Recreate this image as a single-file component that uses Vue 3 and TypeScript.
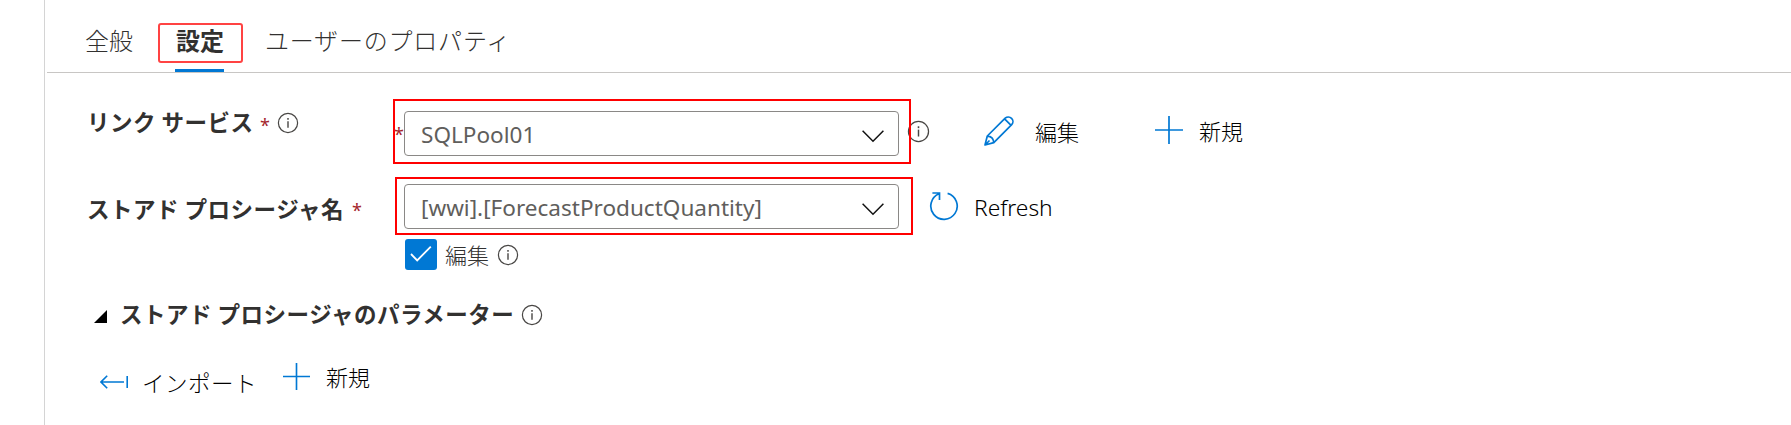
<script setup lang="ts">
import { h, type FunctionalComponent } from 'vue'

const InfoIcon: FunctionalComponent = () =>
  h('svg', { viewBox: '0 0 22 22', fill: 'none', stroke: '#484644', 'stroke-width': 1.2 }, [
    h('circle', { cx: 11, cy: 11, r: 9.6 }),
    h('path', { d: 'M11 9.2v6.6', 'stroke-width': 1.4 }),
    h('path', { d: 'M11 6v1.8', 'stroke-width': 1.5 }),
  ])

const PlusIcon: FunctionalComponent = () =>
  h('svg', { viewBox: '0 0 28 28', fill: 'none', stroke: '#0078d4', 'stroke-width': 1.7 }, [
    h('path', { d: 'M14 0v28M0 14h28' }),
  ])

const ChevronIcon: FunctionalComponent = () =>
  h('svg', { viewBox: '0 0 22 13', fill: 'none', stroke: '#111', 'stroke-width': 1.5 }, [
    h('path', { d: 'M.6 .8 11 11.2 21.4 .8' }),
  ])
</script>

<template>
  <main class="panel">
    <nav class="tabs">
      <span class="tab general">全般</span>
      <span class="tab active">設定</span>
      <span class="tab props">ユーザーのプロパティ</span>
    </nav>

    <section class="row service">
      <div class="label-cell">
        <span class="label l-service">リンク サービス</span>
        <span class="star s-label">*</span>
        <InfoIcon class="info i-label" />
      </div>
      <div class="mark mark-service">
        <span class="star s-field">*</span>
        <div class="select"><span class="value">SQLPool01</span><ChevronIcon class="chevron" /></div>
      </div>
      <InfoIcon class="info i-field" />
      <svg class="pencil" viewBox="0 0 30 30" fill="none" stroke="#0078d4" stroke-width="1.7" stroke-linejoin="round">
        <path d="M1 29 3.3 20 21.2 2.2a4.6 4.6 0 0 1 6.5 6.5L9.8 26.6ZM3.3 20.2c3.8.2 6.2 2.6 6.5 6.4M20.6 2.9l6.5 6.5M1.5 28.5l4-4" />
      </svg>
      <span class="text t-edit">編集</span>
      <PlusIcon class="plus p-service" />
      <span class="text t-new">新規</span>
    </section>

    <section class="row procedure">
      <div class="label-cell">
        <span class="label l-proc">ストアド プロシージャ名</span>
        <span class="star s-proc">*</span>
      </div>
      <div class="mark mark-proc">
        <div class="select"><span class="value">[wwi].[ForecastProductQuantity]</span><ChevronIcon class="chevron" /></div>
      </div>
      <svg class="refresh" viewBox="0 0 30 30" fill="none" stroke="#0078d4" stroke-width="1.7">
        <path d="M18.6 2.4A13.2 13.2 0 1 1 10.2 2.8M3.4 2h7.1v7.1" />
      </svg>
      <span class="text t-refresh">Refresh</span>
    </section>

    <section class="row check-row">
      <span class="checkbox">
        <svg viewBox="0 0 22 18" fill="none" stroke="#fff" stroke-width="1.8"><path d="m1 9 6.2 6.4L20.8 1.6" /></svg>
      </span>
      <span class="text t-check">編集</span>
      <InfoIcon class="info i-check" />
    </section>

    <section class="row heading">
      <svg class="triangle" viewBox="0 0 13 13"><path d="M13 0v13H0Z" fill="#000" /></svg>
      <span class="label l-params">ストアド プロシージャのパラメーター</span>
      <InfoIcon class="info i-params" />
    </section>

    <section class="row actions">
      <svg class="import" viewBox="0 0 28 14" fill="none" stroke="#0078d4" stroke-width="1.6">
        <path d="M1 7h23M7.2 .8 1 7l6.2 6.2M27.2 1v12" />
      </svg>
      <span class="text t-import">インポート</span>
      <PlusIcon class="plus p-param" />
      <span class="text t-param">新規</span>
    </section>
  </main>
</template>

<style>
body { margin: 0; background: #fff; }
</style>

<style scoped>
.panel {
  box-sizing: border-box;
  height: 425px;
  margin-left: 44px;
  border-left: 1px solid #d4d4d4;
  overflow: hidden;
  color: #000;
  font-family: "Noto Sans", "Noto Sans CJK JP", sans-serif;
  font-size: 22px;
  white-space: nowrap;
}
svg { display: block; flex: none; }
.tabs {
  display: flex;
  align-items: flex-start;
  box-sizing: border-box;
  height: 73px;
  margin-left: 2px;
  border-bottom: 1px solid #c8c6c4;
  color: #323130;
  font-family: "Noto Sans CJK JP", sans-serif;
  font-size: 24px;
  font-weight: 300;
}
.tab { line-height: 36px; margin-top: 22px; }
.general { width: 73px; margin-left: 38px; }
.active {
  position: relative;
  box-sizing: border-box;
  width: 85px;
  height: 40px;
  margin-top: 23px;
  border: 2px solid #ff4343;
  border-radius: 3px;
  line-height: 30px;
  padding-right: 1px;
  text-align: center;
  font-weight: 700;
}
.active::after {
  content: "";
  position: absolute;
  left: 15px;
  top: 44px;
  width: 49px;
  height: 3px;
  background: #0078d4;
}
.props { margin-left: 22px; letter-spacing: 0.8px; }

.row { display: flex; align-items: flex-start; }
.label-cell { display: flex; align-items: flex-start; width: 348px; flex: none; }
.label {
  flex: none;
  color: #323130;
  font-family: "Noto Sans CJK JP", sans-serif;
  font-size: 22.5px;
  font-weight: 700;
  letter-spacing: 0.5px;
  line-height: 30px;
}
.text { flex: none; line-height: 30px; font-weight: 300; }
.star { flex: none; color: #a4262c; font-size: 18px; line-height: 30px; }
.info { width: 22px; height: 22px; }
.mark { box-sizing: border-box; width: 518px; border: 2px solid #f00; flex: none; position: relative; z-index: 1; }
.select {
  display: flex;
  align-items: center;
  justify-content: space-between;
  box-sizing: border-box;
  width: 495px;
  height: 45px;
  padding: 0 14px 0 16px;
  border: 1px solid #8a8886;
  border-radius: 4px;
  color: #605e5c;
  font-size: 22.55px;
  line-height: 30px;
}
.value { padding-top: 2px; }
.chevron { width: 22px; height: 13px; margin-top: 5px; }

.service { height: 65px; margin-top: 26px; }
.l-service { margin: 7px 0 0 42px; width: 167px; }
.s-label { margin-top: 11px; width: 23px; margin-left: 6px; }
.i-label { margin-top: 13px; margin-left: -6px; }
.mark-service { height: 65px; padding: 10px 0 0 9px; }
.s-field { position: absolute; left: -1px; top: 18px; }
.i-field { width: 23px; height: 23px; margin: 21px 0 0 -4px; }
.pencil { width: 30px; height: 30px; margin: 17px 0 0 54px; }
.t-edit { width: 44px; margin: 18px 0 0 21px; }
.plus { width: 28px; height: 28px; }
.p-service { margin: 17px 0 0 76px; }
.t-new { margin: 17px 0 0 16px; }

.procedure { height: 58px; margin-top: 13px; }
.procedure .label-cell { width: 350px; }
.l-proc { width: 260px; margin: 16px 0 0 42px; }
.s-proc { margin: 18px 0 0 5px; }
.mark-proc { height: 58px; padding: 5px 0 0 7px; }
.refresh { width: 30px; height: 30px; margin: 14px 0 0 16px; }
.t-refresh { margin: 16px 0 0 15px; font-size: 22.8px; }

.check-row { height: 31px; margin-top: 4px; }
.checkbox {
  display: flex;
  align-items: center;
  justify-content: center;
  width: 32px;
  height: 31px;
  margin-left: 360px;
  border-radius: 3px;
  background: #0078d4;
}
.checkbox svg { width: 22px; height: 18px; margin-bottom: 2px; }
.t-check { width: 44px; margin: 1px 0 0 8px; color: #323130; }
.i-check { margin: 5px 0 0 8px; }

.heading { height: 32px; margin-top: 29px; }
.triangle { width: 13px; height: 13px; margin: 11px 0 0 49px; }
.l-params { width: 394px; margin: -1px 0 0 13px; }
.i-params { margin: 5px 0 0 7px; }

.actions { height: 40px; margin-top: 31px; }
.import { width: 28px; height: 14px; margin: 13px 0 0 55px; }
.t-import { width: 114px; margin: 7px 0 0 14px; font-size: 22.5px; letter-spacing: 0.5px; }
.p-param { width: 27px; height: 27px; margin: 1px 0 0 27px; }
.t-param { margin: 0 0 0 16px; }
</style>
